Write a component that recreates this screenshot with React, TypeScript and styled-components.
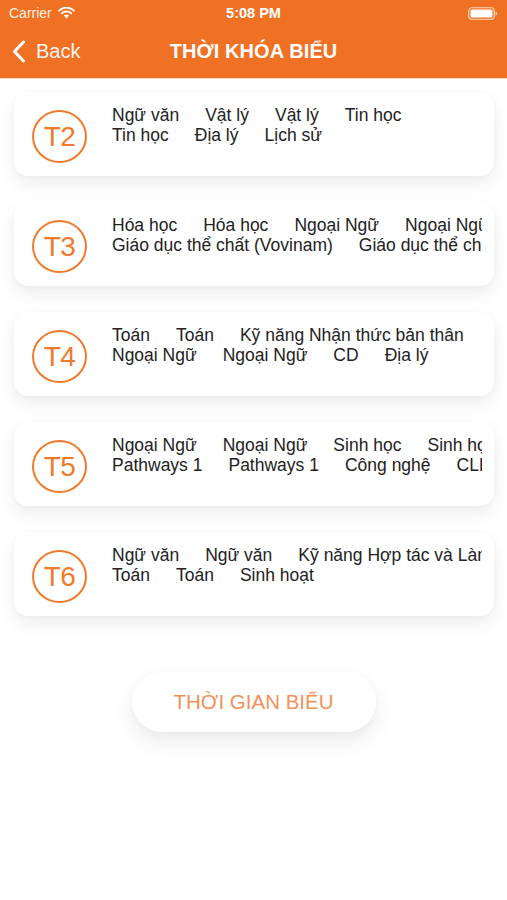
import React from "react";
import styled, { createGlobalStyle } from "styled-components";

const Global = createGlobalStyle`
  html, body { margin: 0; padding: 0; background: #ffffff; }
  body { font-family: "Liberation Sans", Arial, sans-serif; -webkit-font-smoothing: antialiased; }
  * { box-sizing: border-box; }
`;

const ORANGE = "#f07123";

const Page = styled.div`
  width: 507px;
  min-height: 900px;
  background: #fff;
  display: flex;
  flex-direction: column;
`;

const Header = styled.header`
  background: ${ORANGE};
  box-shadow: 0 1px 0 rgba(255, 200, 160, 0.6);
  position: relative;
  z-index: 2;
`;

const StatusBar = styled.div`
  height: 24px;
  display: grid;
  grid-template-columns: 1fr auto 1fr;
  align-items: center;
  padding: 2px 9px 0 9px;
  color: #fff;
  font-size: 14px;
`;

const Carrier = styled.div`
  display: flex;
  align-items: center;
  gap: 6px;
  color: rgba(255, 255, 255, 0.92);
`;

const Clock = styled.div`
  font-weight: 700;
  font-size: 14.5px;
`;

const BatteryWrap = styled.div`
  justify-self: end;
  display: flex;
  align-items: center;
`;

const NavBar = styled.div`
  height: 54px;
  display: grid;
  grid-template-columns: 1fr auto 1fr;
  align-items: center;
  padding: 0 12px;
  color: #fff;
`;

const BackButton = styled.div`
  display: flex;
  align-items: center;
  gap: 10px;
  font-size: 20px;
  color: rgba(255, 255, 255, 0.95);
  padding-top: 1px;
`;

const Title = styled.h1`
  margin: 0;
  font-size: 20px;
  font-weight: 700;
  color: #fff;
  letter-spacing: 0.1px;
`;

const List = styled.main`
  display: flex;
  flex-direction: column;
  gap: 26px;
  padding: 14px 13px 0 14px;
`;

const Card = styled.section`
  height: 84px;
  background: #fff;
  border-radius: 14px;
  box-shadow: 0 8px 18px rgba(0, 0, 0, 0.07), 0 1px 4px rgba(0, 0, 0, 0.03);
  display: flex;
  align-items: flex-start;
  padding: 13px 12px 0 18px;
  gap: 25px;
`;

const DayBadge = styled.div`
  flex: none;
  width: 55px;
  height: 53px;
  margin-top: 5px;
  border: 2px solid #ef7a2c;
  border-radius: 50%;
  display: flex;
  align-items: center;
  justify-content: center;
  color: #ef7a2c;
  font-size: 28px;
  font-weight: 400;
  letter-spacing: -0.5px;
`;

const Subjects = styled.div`
  flex: 1;
  min-width: 0;
  overflow: hidden;
  display: flex;
  flex-direction: column;
`;

const SubjectRow = styled.div`
  display: flex;
  gap: 26px;
  white-space: nowrap;
  font-size: 17.5px;
  line-height: 20px;
  color: #222;
`;

const ButtonArea = styled.div`
  display: flex;
  justify-content: center;
  padding-top: 56px;
`;

const PillButton = styled.button`
  width: 244px;
  height: 60px;
  border: none;
  border-radius: 30px;
  background: #fff;
  box-shadow: 0 10px 22px rgba(0, 0, 0, 0.08), 0 1px 6px rgba(0, 0, 0, 0.03);
  color: #f2905a;
  font-family: "Liberation Sans", Arial, sans-serif;
  font-size: 20.5px;
  cursor: pointer;
`;

const Wifi = () => (
  <svg width="17" height="12" viewBox="0 0 17 12">
    <path d="M8.5 11.5 L5.9 8.6 A3.8 3.8 0 0 1 11.1 8.6 Z" fill="#fff" />
    <path d="M3.8 6.3 A6.8 6.8 0 0 1 13.2 6.3" stroke="#fff" strokeWidth="1.9" fill="none" strokeLinecap="round" />
    <path d="M1.2 3.6 A10.5 10.5 0 0 1 15.8 3.6" stroke="#fff" strokeWidth="1.9" fill="none" strokeLinecap="round" />
  </svg>
);

const Battery = () => (
  <svg width="30" height="13" viewBox="0 0 30 13">
    <rect x="0.75" y="0.75" width="25.5" height="11.5" rx="3" fill="none" stroke="rgba(255,255,255,0.7)" strokeWidth="1.2" />
    <rect x="2.5" y="2.5" width="22" height="8" rx="1.6" fill="#fff" />
    <path d="M27.6 4.5 Q29.2 4.7 29.2 6.5 Q29.2 8.3 27.6 8.5 Z" fill="rgba(255,255,255,0.7)" />
  </svg>
);

const Chevron = () => (
  <svg width="14" height="23" viewBox="0 0 14 23">
    <path d="M11.5 2 L2.5 11.5 L11.5 21" stroke="#fff" strokeWidth="3" fill="none" strokeLinecap="round" strokeLinejoin="round" />
  </svg>
);

const schedule: { day: string; rows: string[][] }[] = [
  { day: "T2", rows: [["Ngữ văn", "Vật lý", "Vật lý", "Tin học"], ["Tin học", "Địa lý", "Lịch sử"]] },
  {
    day: "T3",
    rows: [
      ["Hóa học", "Hóa học", "Ngoại Ngữ", "Ngoại Ngữ"],
      ["Giáo dục thể chất (Vovinam)", "Giáo dục thể chất (Vovinam)"],
    ],
  },
  { day: "T4", rows: [["Toán", "Toán", "Kỹ năng Nhận thức bản thân"], ["Ngoại Ngữ", "Ngoại Ngữ", "CD", "Địa lý"]] },
  {
    day: "T5",
    rows: [
      ["Ngoại Ngữ", "Ngoại Ngữ", "Sinh học", "Sinh học"],
      ["Pathways 1", "Pathways 1", "Công nghệ", "CLB"],
    ],
  },
  { day: "T6", rows: [["Ngữ văn", "Ngữ văn", "Kỹ năng Hợp tác và Làm việc nhóm"], ["Toán", "Toán", "Sinh hoạt"]] },
];

export default function App() {
  return (
    <Page>
      <Global />
      <Header>
        <StatusBar>
          <Carrier>
            Carrier <Wifi />
          </Carrier>
          <Clock>5:08 PM</Clock>
          <BatteryWrap>
            <Battery />
          </BatteryWrap>
        </StatusBar>
        <NavBar>
          <BackButton>
            <Chevron />
            Back
          </BackButton>
          <Title>THỜI KHÓA BIỂU</Title>
          <div />
        </NavBar>
      </Header>
      <List>
        {schedule.map((d) => (
          <Card key={d.day}>
            <DayBadge>{d.day}</DayBadge>
            <Subjects>
              {d.rows.map((row, i) => (
                <SubjectRow key={i}>
                  {row.map((s, j) => (
                    <span key={j}>{s}</span>
                  ))}
                </SubjectRow>
              ))}
            </Subjects>
          </Card>
        ))}
      </List>
      <ButtonArea>
        <PillButton>THỜI GIAN BIỂU</PillButton>
      </ButtonArea>
    </Page>
  );
}
